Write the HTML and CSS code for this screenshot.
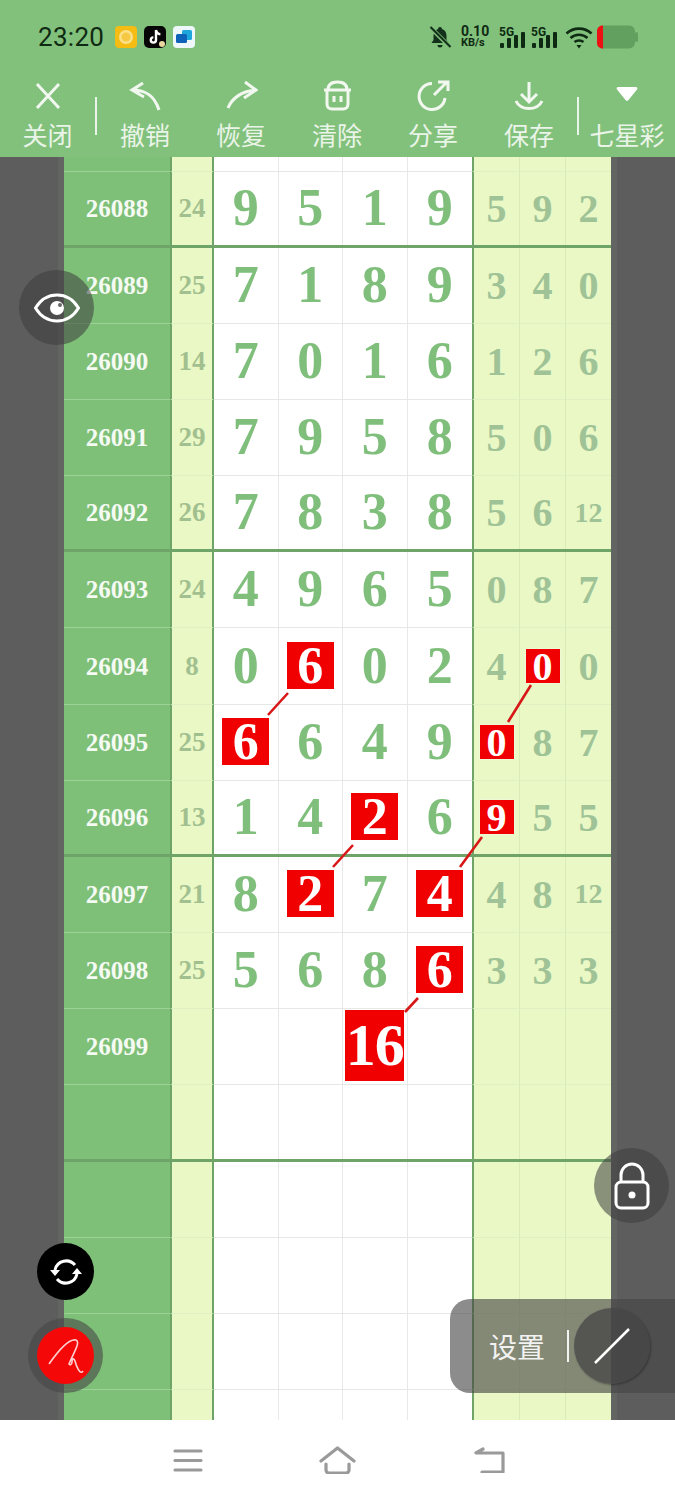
FILE: index.html
```html
<!DOCTYPE html>
<html lang="zh-CN">
  <head>
    <meta charset="UTF-8" />
    <meta name="viewport" content="width=device-width, initial-scale=1.0" />
    <title>七星彩</title>
    <link rel="stylesheet" href="styles.css">
  </head>
  <body>
    <div class="page">
      <div class="status">
        <span class="time">23:20</span>
        <div class="apps">
          <svg class="app" viewBox="0 0 22 22"><rect width="22" height="22" rx="4" fill="#f5bd14"/><circle cx="11" cy="11" r="7" fill="#fbe08a"/><circle cx="11" cy="11" r="4.5" fill="#f6c945"/></svg>
          <svg class="app" viewBox="0 0 22 22"><rect width="22" height="22" rx="5" fill="#060606"/><path d="M12 4v10a2.6 2.6 0 1 1-2.6-2.6M12 4c.4 2.6 2 4 4.4 4.2" fill="none" stroke="#fff" stroke-width="2.4"/><circle cx="18" cy="18" r="3" fill="#e9d9a0"/></svg>
          <svg class="app" viewBox="0 0 22 22"><rect width="22" height="22" rx="4" fill="#eef8fb"/><rect x="9" y="4" width="10" height="10" rx="1.5" fill="#1fa6dd"/><rect x="3" y="8" width="11" height="9" rx="1.5" fill="#0e62b8"/></svg>
        </div>
        <div class="sys">
          <svg class="bell" viewBox="0 0 24 24"><path d="M12 2a2 2 0 0 1 2 2c3 1 4.500 3.500 4.500 7v4l2 3H3.500l2-3v-4c0-3.500 1.500-6 4.500-7a2 2 0 0 1 2-2zM9.500 20h5a2.500 2.500 0 0 1-5 0z" fill="#12301a"/><path d="M2 2l20 20" stroke="#82c17c" stroke-width="4.500"/><path d="M2.500 2l20 20" stroke="#12301a" stroke-width="2.200"/></svg>
          <div class="speed"><span>0.10</span><span class="unit">KB/s</span></div>
          <svg class="signal" viewBox="0 0 27 24"><text x="0" y="10.500" class="five-g">5G</text><rect x="1" y="18" width="4" height="5" rx="1"/><rect x="8" y="13" width="4" height="10" rx="1"/><rect x="15" y="10" width="4" height="13" rx="1"/><rect x="22" y="7" width="4" height="16" rx="1"/></svg>
          <svg class="signal" viewBox="0 0 27 24"><text x="0" y="10.500" class="five-g">5G</text><rect x="1" y="18" width="4" height="5" rx="1"/><rect x="8" y="13" width="4" height="10" rx="1"/><rect x="15" y="10" width="4" height="13" rx="1"/><rect x="22" y="7" width="4" height="16" rx="1"/></svg>
          <svg class="wifi" viewBox="0 0 28 24"><path d="M1.500 8.500c7-6.500 18-6.500 25 0M5.500 13c4.800-4.300 12.200-4.300 17 0M9.500 17c2.500-2 6.500-2 9 0" fill="none" stroke="#0f2a12" stroke-width="2.600"/><path d="M11.500 20h5L14 23.500z" fill="#0f2a12"/></svg>
          <svg class="battery" viewBox="0 0 41 24"><rect x="0" y="0.500" width="38" height="23" rx="6" fill="#62a060"/><rect x="38" y="7" width="3" height="10" rx="1.500" fill="#62a060"/><path d="M6 0.500C2 0.500 0 3 0 6v12c0 3 2 5.500 6 5.500z" fill="#ee1111"/></svg>
        </div>
      </div>

      <div class="toolbar">
        <div class="tool tool-first">
          <svg class="tool-icon" viewBox="0 0 34 34"><path d="M6 5l22 24M28 5L6 29"/></svg>
          <span>关闭</span>
        </div>
        <i class="tool-sep"></i>
        <div class="tool">
          <svg class="tool-icon" viewBox="0 0 34 34"><path d="M15 4L4 11l12 7M4 11c12 0 22 4 27 20"/></svg>
          <span>撤销</span>
        </div>
        <div class="tool">
          <svg class="tool-icon" viewBox="0 0 34 34"><path d="M21 3l11 8-12 8M32 11C18 12 8 19 4 29"/></svg>
          <span>恢复</span>
        </div>
        <div class="tool">
          <svg class="tool-icon" viewBox="0 0 34 34"><path d="M4 11h27M8 11c0-6 4-8 9.500-8S27 5 27 11M7 11v14c0 3 2 5 5 5h11c3 0 5-2 5-5V11M14 17v6M21 17v6"/></svg>
          <span>清除</span>
        </div>
        <div class="tool">
          <svg class="tool-icon" viewBox="0 0 34 34"><path d="M16 4.500A13 13 0 1 0 29 19M18 16L30 4M22 3h10v9"/></svg>
          <span>分享</span>
        </div>
        <div class="tool">
          <svg class="tool-icon" viewBox="0 0 34 34"><path d="M17 3v20M9 15l8 8 8-8M4 22c4 10 22 10 26 0"/></svg>
          <span>保存</span>
        </div>
        <i class="tool-sep"></i>
        <div class="tool">
          <svg class="tool-icon" viewBox="0 0 34 34"><path class="solid" d="M8 8h18a1.500 1.500 0 0 1 1 2.500L18.500 21a2 2 0 0 1-3 0L7 10.500A1.500 1.500 0 0 1 8 8z"/></svg>
          <span>七星彩</span>
        </div>
      </div>

      <div class="board">
        <div class="row row-clip"><b class="issue"></b><b class="sum"></b><b></b><b></b><b></b><b></b><b class="rt"></b><b class="rt"></b><b class="rt"></b></div>
        <div class="row row-end"><b class="issue">26088</b><b class="sum">24</b><b>9</b><b>5</b><b>1</b><b>9</b><b class="rt">5</b><b class="rt">9</b><b class="rt">2</b></div>
        <div class="row"><b class="issue">26089</b><b class="sum">25</b><b>7</b><b>1</b><b>8</b><b>9</b><b class="rt">3</b><b class="rt">4</b><b class="rt">0</b></div>
        <div class="row"><b class="issue">26090</b><b class="sum">14</b><b>7</b><b>0</b><b>1</b><b>6</b><b class="rt">1</b><b class="rt">2</b><b class="rt">6</b></div>
        <div class="row"><b class="issue">26091</b><b class="sum">29</b><b>7</b><b>9</b><b>5</b><b>8</b><b class="rt">5</b><b class="rt">0</b><b class="rt">6</b></div>
        <div class="row row-end"><b class="issue">26092</b><b class="sum">26</b><b>7</b><b>8</b><b>3</b><b>8</b><b class="rt">5</b><b class="rt">6</b><b class="rt small">12</b></div>
        <div class="row"><b class="issue">26093</b><b class="sum">24</b><b>4</b><b>9</b><b>6</b><b>5</b><b class="rt">0</b><b class="rt">8</b><b class="rt">7</b></div>
        <div class="row"><b class="issue">26094</b><b class="sum">8</b><b>0</b><b><em class="hit">6</em></b><b>0</b><b>2</b><b class="rt">4</b><b class="rt"><em class="hit hit-sm">0</em></b><b class="rt">0</b></div>
        <div class="row"><b class="issue">26095</b><b class="sum">25</b><b><em class="hit">6</em></b><b>6</b><b>4</b><b>9</b><b class="rt"><em class="hit hit-sm">0</em></b><b class="rt">8</b><b class="rt">7</b></div>
        <div class="row row-end"><b class="issue">26096</b><b class="sum">13</b><b>1</b><b>4</b><b><em class="hit">2</em></b><b>6</b><b class="rt"><em class="hit hit-sm">9</em></b><b class="rt">5</b><b class="rt">5</b></div>
        <div class="row"><b class="issue">26097</b><b class="sum">21</b><b>8</b><b><em class="hit">2</em></b><b>7</b><b><em class="hit">4</em></b><b class="rt">4</b><b class="rt">8</b><b class="rt small">12</b></div>
        <div class="row"><b class="issue">26098</b><b class="sum">25</b><b>5</b><b>6</b><b>8</b><b><em class="hit">6</em></b><b class="rt">3</b><b class="rt">3</b><b class="rt">3</b></div>
        <div class="row"><b class="issue">26099</b><b class="sum"></b><b></b><b></b><b><em class="hit hit-lg">16</em></b><b></b><b class="rt"></b><b class="rt"></b><b class="rt"></b></div>
        <div class="row row-end"><b class="issue"></b><b class="sum"></b><b></b><b></b><b></b><b></b><b class="rt"></b><b class="rt"></b><b class="rt"></b></div>
        <div class="row"><b class="issue"></b><b class="sum"></b><b></b><b></b><b></b><b></b><b class="rt"></b><b class="rt"></b><b class="rt"></b></div>
        <div class="row"><b class="issue"></b><b class="sum"></b><b></b><b></b><b></b><b></b><b class="rt"></b><b class="rt"></b><b class="rt"></b></div>
        <div class="row"><b class="issue"></b><b class="sum"></b><b></b><b></b><b></b><b></b><b class="rt"></b><b class="rt"></b><b class="rt"></b></div>
        <div class="row"><b class="issue"></b><b class="sum"></b><b></b><b></b><b></b><b></b><b class="rt"></b><b class="rt"></b><b class="rt"></b></div>
      </div>

      <div class="navbar">
        <svg class="nav-icon" viewBox="0 0 30 24"><path d="M2 3h26M2 12.500h26M2 22h26"/></svg>
        <svg class="nav-icon nav-home" viewBox="0 0 38 28"><path d="M2 15L18.500 2 35 15M7 18v6q0 3 3 3h17q3 0 3-3v-6"/></svg>
        <svg class="nav-icon nav-back" viewBox="0 0 32 26"><path d="M10 2L3 6h27v19H9"/></svg>
      </div>

      <!-- lines between the marked numbers -->
      <svg class="links" viewBox="0 0 675 1500">
        <path d="M288 693L268 715M531 685L508 722M353 845L333 867M482 837L460 867M418 998L405 1012"/>
      </svg>

      <div class="fab fab-eye">
        <svg viewBox="0 0 46 30" width="46" height="30"><path d="M1.500 15C7 6 14 2 23 2s16 4 21.500 13C39 24 32 28 23 28S7 24 1.500 15z" fill="none" stroke="#fff" stroke-width="3"/><circle cx="23" cy="15" r="7" fill="#fff"/><circle cx="26" cy="12" r="2" fill="#666"/></svg>
      </div>
      <div class="fab fab-lock">
        <svg viewBox="0 0 36 48" width="36" height="48"><path d="M7 20V13a11 11 0 0 1 22 0v7" fill="none" stroke="#fff" stroke-width="3"/><rect x="2" y="20" width="32" height="26" rx="5" fill="none" stroke="#fff" stroke-width="3"/><circle cx="18" cy="33" r="3.500" fill="#fff"/></svg>
      </div>
      <div class="fab fab-sync">
        <svg viewBox="0 0 32 28" width="32" height="28"><path d="M5 12A11.500 11.500 0 0 1 25 7M27 16A11.500 11.500 0 0 1 7 21" fill="none" stroke="#fff" stroke-width="3"/><path d="M0 12h10l-5 6zM22 16h10l-5-6z" fill="#fff"/></svg>
      </div>
      <div class="fab-ring">
        <div class="fab-pen">
          <svg viewBox="0 0 36 36" width="36" height="36"><path d="M1 26C8 16 20 0 28 2c5 2-3 14-7 24 1 2 3 0 3-2 0-4 2-4 3-1 1 4 5 15 8 10" fill="none" stroke="#ffd0d0" stroke-width="1.600"/></svg>
        </div>
      </div>
      <div class="panel">
        <span class="panel-text">设置</span>
        <i class="panel-sep"></i>
        <div class="panel-pen">
          <svg viewBox="0 0 36 36" width="36" height="36"><path d="M1 35L35 1" stroke="#fff" stroke-width="2.500"/></svg>
        </div>
      </div>
    </div>
  </body>
</html>
```

FILE: styles.css
```css
body {
  margin: 0;
  background-color: #fff;
}
.page {
  position: relative;
  width: 675px;
  height: 1500px;
  overflow: hidden;
}

/* status bar */
.status {
  display: flex;
  align-items: center;
  height: 74px;
  padding: 0 37px 0 38px;
  box-sizing: border-box;
  background-color: #82c17c;
  color: #0f2a12;
}
.time {
  font-family: "Roboto", sans-serif;
  font-size: 26px;
  letter-spacing: 0.3px;
}
.apps {
  display: flex;
  gap: 7px;
  margin-left: 11px;
}
.app {
  width: 22px;
  height: 22px;
}
.sys {
  display: flex;
  align-items: center;
  margin-left: auto;
}
.bell {
  width: 24px;
  height: 24px;
}
.speed {
  display: flex;
  flex-direction: column;
  width: 27px;
  margin-left: 9px;
  font-family: "Roboto", sans-serif;
  font-weight: 700;
  font-size: 14px;
  line-height: 12px;
  white-space: nowrap;
}
.unit {
  font-size: 11px;
}
.signal {
  width: 27px;
  height: 24px;
  margin-left: 11px;
  fill: #0f2a12;
}
.signal + .signal {
  margin-left: 5px;
}
.five-g {
  font-family: "Roboto", sans-serif;
  font-size: 12px;
  font-weight: 700;
}
.wifi {
  width: 28px;
  height: 24px;
  margin-left: 7px;
}
.battery {
  width: 41px;
  height: 24px;
  margin-left: 4px;
}

/* toolbar */
.toolbar {
  display: flex;
  height: 83px;
  background-color: #82c17c;
  color: #eaf4e8;
}
.tool {
  display: flex;
  flex-direction: column;
  align-items: center;
  width: 96px;
  font-family: "Noto Sans CJK SC", sans-serif;
  font-size: 25px;
  line-height: 34px;
}
.tool-first {
  width: 95px;
}
.tool-icon {
  width: 34px;
  height: 34px;
  margin: 5px 0 4px;
  fill: none;
  stroke: #f2f8f0;
  stroke-width: 3;
}
.tool-icon .solid {
  fill: #fff;
  stroke: none;
}
.tool-sep {
  flex: none;
  width: 2px;
  height: 38px;
  margin-top: 23px;
  background-color: #eaf4e8;
}

/* the chart */
.board {
  height: 1263px;
  padding: 0 64px;
  overflow: hidden;
  background-color: #5e5d5e;
}
.row {
  display: grid;
  grid-template-columns: 106px 44px repeat(4, 64.5px) 48px 46px 45px;
  height: 76.17px;
  box-sizing: border-box;
  border-bottom: 1px solid #e6e8e4;
  background-color: #fff;
  box-shadow: -6px 0 0 #636562, 6px 0 0 #636562;
}
.row-clip {
  height: 14.5px;
}
.row-end {
  border-bottom: 3px solid #6fa468;
}
.row b {
  display: flex;
  align-items: center;
  justify-content: center;
  box-sizing: border-box;
  padding-bottom: 2px;
  border-right: 1px solid #e8e8e8;
  font-family: "Liberation Serif", serif;
  font-size: 52px;
  color: #7fbf7b;
}
.row b:nth-child(6) {
  border-right: none;
}
.row .issue,
.row .sum,
.row .rt {
  margin-bottom: -1px;
  padding-bottom: 0;
  border-bottom: 1px solid #dff0c2;
}
.row-end .issue,
.row-end .sum,
.row-end .rt {
  margin-bottom: 0;
  border-bottom: none;
}
.row .issue {
  padding-top: 1px;
  border-right: none;
  border-bottom-color: #9bd295;
  background-color: #7fc079;
  font-size: 25px;
  color: #f5faf3;
}
.row .sum {
  border-left: 2px solid #6fa468;
  border-right: 2px solid #6fa468;
  background-color: #e9f8c5;
  font-size: 27px;
  color: #a2c08f;
}
.row .rt {
  border-right: 1px solid #d9ecb8;
  background-color: #e9f8c5;
  font-size: 40px;
  color: #9fc396;
}
.row .rt:last-child {
  border-right: none;
}
.row b:nth-child(7) {
  border-left: 2px solid #6fa468;
}
.row .small {
  font-size: 28px;
}
.hit {
  display: flex;
  align-items: center;
  justify-content: center;
  width: 47px;
  height: 47px;
  background-color: #f00000;
  font-style: normal;
  color: #fff;
  box-shadow: 0 0 2px rgba(255, 255, 255, 0.8);
}
.hit-sm {
  width: 34px;
  height: 34px;
  font-size: 40px;
}
.hit-lg {
  width: 59px;
  height: 71px;
  font-size: 60px;
  letter-spacing: -1px;
}

/* bottom navigation */
.navbar {
  display: flex;
  justify-content: center;
  align-items: center;
  gap: 116px;
  height: 80px;
  padding-left: 2px;
  box-sizing: border-box;
  background-color: #fff;
}
.nav-icon {
  width: 30px;
  height: 24px;
  fill: none;
  stroke: #9a9a9a;
  stroke-width: 3.2;
  stroke-linecap: round;
  stroke-linejoin: round;
}
.nav-home {
  width: 38px;
  height: 28px;
}
.nav-back {
  width: 32px;
  height: 26px;
}

/* things floating over the chart */
.links {
  position: absolute;
  top: 0;
  left: 0;
  width: 675px;
  height: 1500px;
  fill: none;
  stroke: #d81818;
  stroke-width: 2.6;
  pointer-events: none;
}
.fab {
  position: absolute;
  display: flex;
  align-items: center;
  justify-content: center;
  border-radius: 50%;
}
.fab-eye {
  left: 19px;
  top: 270px;
  width: 75px;
  height: 75px;
  background-color: rgba(60, 60, 60, 0.55);
}
.fab-lock {
  left: 594px;
  top: 1148px;
  width: 75px;
  height: 75px;
  background-color: rgba(60, 60, 60, 0.55);
}
.fab-sync {
  left: 37px;
  top: 1243px;
  width: 57px;
  height: 57px;
  background-color: #000;
}
.fab-ring {
  position: absolute;
  left: 28px;
  top: 1318px;
  display: flex;
  align-items: center;
  justify-content: center;
  width: 75px;
  height: 75px;
  border-radius: 50%;
  background-color: rgba(70, 70, 70, 0.6);
}
.fab-pen {
  display: flex;
  align-items: center;
  justify-content: center;
  width: 57px;
  height: 57px;
  border-radius: 50%;
  background-color: #f40808;
}
.panel {
  position: absolute;
  left: 450px;
  top: 1299px;
  display: flex;
  align-items: center;
  width: 225px;
  height: 94px;
  padding-left: 39px;
  box-sizing: border-box;
  border-radius: 20px 0 0 20px;
  background-color: rgba(70, 70, 70, 0.62);
}
.panel-text {
  font-family: "Noto Sans CJK SC", sans-serif;
  font-size: 28px;
  color: #f2f2f2;
}
.panel-sep {
  width: 2px;
  height: 32px;
  margin-left: 22px;
  background-color: #f2f2f2;
}
.panel-pen {
  display: flex;
  align-items: center;
  justify-content: center;
  width: 76px;
  height: 76px;
  margin-left: 5px;
  border-radius: 50%;
  background-color: rgba(70, 70, 70, 0.75);
  box-shadow: 1px 1px 2px rgba(30, 30, 30, 0.5);
}
```
